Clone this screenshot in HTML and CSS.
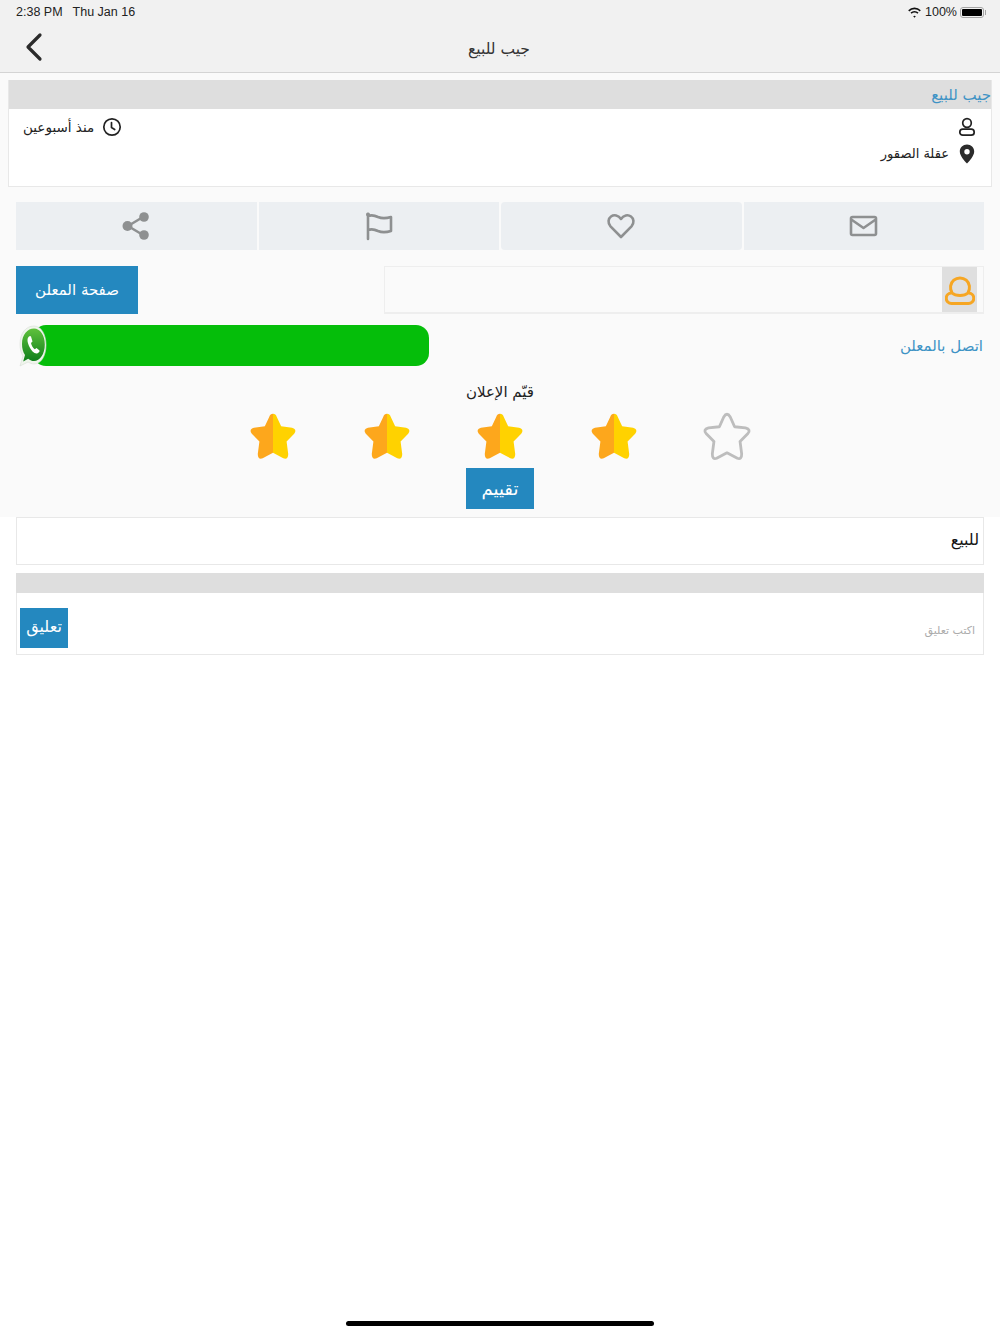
FILE: index.html
```html
<!DOCTYPE html>
<html lang="ar" dir="rtl">
<head>
    <meta charset="UTF-8">
    <meta name="viewport" content="width=device-width, initial-scale=1.0">
    <title>جيب للبيع</title>
    <link rel="stylesheet" href="styles.css">
</head>
<body>
    <svg class="sprites" width="0" height="0">
        <symbol id="star-full" viewBox="0 0 46 46">
            <path class="star-left" d="M23 2.500Q20.500 2.500 19.500 5.500L15.500 14 5.500 15.500Q.5 17 3.500 21L10.500 28 9 39.500Q9 45 13.500 43.500L23 38.500Z"/>
            <path class="star-right" d="M23 2.500Q25.500 2.500 26.500 5.500L30.500 14 40.500 15.500Q45.500 17 42.500 21L35.500 28 37 39.500Q37 45 32.500 43.500L23 38.500Z"/>
        </symbol>
    </svg>

    <header class="top">
        <div class="status" dir="ltr">
            <span class="status-time">2:38 PM</span>
            <span class="status-date">Thu Jan 16</span>
            <span class="status-right">
                <svg width="15" height="11" viewBox="0 0 15 11"><path d="M7.500 2.300c2 0 3.800.8 5.200 2.100l1.100-1.200A9.200 9.200 0 0 0 7.500.6 9.200 9.200 0 0 0 1.200 3.200l1.100 1.200a7.500 7.500 0 0 1 5.200-2.100Zm0 3.300c1.100 0 2.100.4 2.900 1.100l1.100-1.200a5.900 5.900 0 0 0-8 0l1.100 1.200c.8-.7 1.800-1.100 2.900-1.100Zm0 3.200c-.5 0-1 .2-1.300.5l1.300 1.400 1.300-1.400c-.3-.3-.8-.5-1.300-.5Z"/></svg>
                <span>100%</span>
                <span class="battery"><span class="battery-fill"></span></span>
            </span>
        </div>
        <div class="nav">
            <svg class="back" width="20" height="30" viewBox="0 0 20 30"><path d="M17 3 5 15l12 12"/></svg>
            <h1>جيب للبيع</h1>
        </div>
    </header>

    <main class="content">
        <section class="ad-card">
            <h2>جيب للبيع</h2>
            <div class="ad-info">
                <div class="ad-col">
                    <div class="info-row">
                        <svg class="ico-dark" width="20" height="20" viewBox="0 0 20 20"><circle cx="10" cy="6" r="4.300"/><rect x="2.800" y="12.200" width="14.400" height="6" rx="3"/></svg>
                    </div>
                    <div class="info-row">
                        <svg class="ico-fill" width="20" height="20" viewBox="0 0 20 20"><path fill-rule="evenodd" d="M10 .6c-4 0-7.200 3-7.200 6.900 0 4.300 4.700 9.400 7.200 12 2.500-2.600 7.200-7.700 7.200-12C17.200 3.600 14 .6 10 .6Zm0 4.400a2.700 2.700 0 1 1 0 5.400 2.700 2.700 0 0 1 0-5.400Z"/></svg>
                        <span>عقلة الصقور</span>
                    </div>
                </div>
                <div class="info-row info-time">
                    <svg class="ico-dark" width="20" height="20" viewBox="0 0 20 20"><circle cx="10" cy="10" r="8.200"/><path d="M9.500 5.500v5l3.200 2"/></svg>
                    <span>منذ أسبوعين</span>
                </div>
            </div>
        </section>

        <div class="actions">
            <a class="action">
                <svg width="30" height="24" viewBox="0 0 30 24"><rect x="2" y="3" width="25" height="18" rx="1.500"/><path d="m3 6 11.500 8L26 6"/></svg>
            </a>
            <a class="action action-round">
                <svg width="30" height="28" viewBox="0 0 30 28"><path d="M15 25 4.500 14.300C1.500 11 2.200 6.500 5 4.500c3-2.200 7.500-1.500 10 2.500 2.500-4 7-4.700 10-2.500 2.800 2 3.500 6.500.5 9.800Z"/></svg>
            </a>
            <a class="action">
                <svg width="30" height="30" viewBox="0 0 30 30"><path d="M4 3v25M4 5c4-1.500 7-.5 10 1 4 1.700 8 1.500 13 0v14c-5 1.500-9 1.700-13 0-3-1.500-6-2.500-10-1"/><circle cx="4" cy="3.500" r="2" class="dot"/></svg>
            </a>
            <a class="action">
                <svg width="30" height="30" viewBox="0 0 30 30"><path d="M22 6 7 15l15 9"/><circle cx="23" cy="6" r="4.800" class="dot"/><circle cx="6.500" cy="15" r="5" class="dot"/><circle cx="23" cy="24" r="4.800" class="dot"/></svg>
            </a>
        </div>

        <div class="advertiser">
            <div class="advertiser-name">
                <span class="avatar">
                    <svg width="30" height="30" viewBox="0 0 30 30"><path d="M7 17.500a9.500 9.500 0 1 1 16 0"/><path d="M7 18H6.500a5.200 5.200 0 0 0 0 10.500h17a5.200 5.200 0 0 0 0-10.500H23c-2 1.800-4.800 2.500-8 2.500s-6-.7-8-2.500Z"/></svg>
                </span>
            </div>
            <a class="btn btn-page">صفحة المعلن</a>
        </div>

        <div class="contact">
            <a class="contact-link">اتصل بالمعلن</a>
            <a class="whatsapp">
                <svg class="wa-icon" width="28" height="42" viewBox="0 0 28 42">
                    <defs>
                        <linearGradient id="wa-grad" x1="0" y1="0" x2="0" y2="1">
                            <stop offset="0" stop-color="#5fc13c"/>
                            <stop offset="1" stop-color="#0f7f1b"/>
                        </linearGradient>
                    </defs>
                    <path class="wa-edge" d="M15 1C7 1 1 8 1 19c0 5 1 9 3 12L1 41l8-4c2 1 4 2 6 2 7 0 12-8 12-19S22 1 15 1Z"/>
                    <path fill="url(#wa-grad)" d="M15 3.500C8.500 3.500 3 9.500 3 19c0 4.500 1 8 3 11l-1.800 6.500 5-2.800c2 1.400 3.800 2.300 5.800 2.300 6 0 10.800-7 10.800-16.500S21 3.500 15 3.500Z"/>
                    <path class="wa-phone" d="M10 11.500c-2 1.500-2 5 0 9.500 2 4.500 5 7.500 7.500 7.500 1.500 0 3.500-2 3-3l-3-2.500-1.700 1.300c-1.500-.8-3.500-4-3.800-6.300l1.500-1.500-1.500-5c-.5-.7-1.300-.7-2 0Z"/>
                </svg>
            </a>
        </div>

        <section class="rating">
            <p class="rating-title">قيّم الإعلان</p>
            <div class="stars">
                <svg class="star-empty" width="50" height="50" viewBox="0 0 46 46"><path d="M20 5.500Q23 .5 26 5.500L30 14.500 40 15.500Q45.500 17 42 21L35 28 36.500 39.500Q36.500 45 32.500 43.500L23 38.500 13.500 43.500Q9.500 45 9.500 39.500L11 28 4 21Q.5 17 6 15.500L16 14.500Z"/></svg>
                <svg width="50" height="50"><use href="#star-full"/></svg>
                <svg width="50" height="50"><use href="#star-full"/></svg>
                <svg width="50" height="50"><use href="#star-full"/></svg>
                <svg width="50" height="50"><use href="#star-full"/></svg>
            </div>
            <a class="btn btn-rate">تقييم</a>
        </section>
    </main>

    <section class="lower">
        <div class="description">للبيع</div>
        <div class="comments">
            <div class="comments-bar"></div>
            <div class="comment-form">
                <span class="comment-hint">اكتب تعليق</span>
                <a class="btn btn-comment">تعليق</a>
            </div>
        </div>
    </section>

    <div class="home-bar"></div>
</body>
</html>
```

FILE: styles.css
```css
* {
    margin: 0;
    padding: 0;
    box-sizing: border-box;
    font-family: 'DejaVu Sans', 'Noto Sans', sans-serif;
}

body {
    background-color: #FFFFFF;
    color: #222222;
    display: flex;
    flex-direction: column;
    height: 1334px;
    overflow: hidden;
}

.sprites {
    position: absolute;
}

/* top bar */
.top {
    height: 73px;
    background-color: #F1F1F1;
    border-bottom: 1px solid #D4D4D4;
}

.status {
    display: flex;
    align-items: center;
    height: 24px;
    padding: 0 16px;
    font-size: 12.500px;
    color: #222222;
}

.status span {
    font-family: 'Liberation Sans', sans-serif;
}

.status-date {
    margin-left: 10px;
}

.status-right {
    display: flex;
    align-items: center;
    gap: 3px;
    margin-left: auto;
}

.status-right svg {
    fill: #111111;
}

.battery {
    display: block;
    position: relative;
    width: 24px;
    height: 11px;
    padding: 1px;
    border: 1px solid #A5A5A5;
    border-radius: 3px;
}

.battery::after {
    content: "";
    position: absolute;
    right: -3px;
    top: 2px;
    width: 1.500px;
    height: 5px;
    background-color: #A5A5A5;
}

.battery-fill {
    display: block;
    height: 100%;
    background-color: #000000;
    border-radius: 1px;
}

.nav {
    display: flex;
    align-items: center;
    justify-content: center;
    position: relative;
    height: 48px;
}

.nav h1 {
    font-size: 15.500px;
    font-weight: normal;
    color: #333333;
    margin: 2px 2px 0 0;
}

.back {
    position: absolute;
    left: 23px;
    top: 8px;
    fill: none;
    stroke: #2B2B2B;
    stroke-width: 3.200;
    stroke-linecap: round;
    stroke-linejoin: round;
}

/* upper part */
.content {
    background-color: #FAFAFA;
    height: 444px;
    padding: 7px 16px 0;
}

.ad-card {
    margin: 0 -8px 15px;
    height: 107px;
    background-color: #FFFFFF;
    border: 1px solid #E8E8E8;
    border-top: none;
}

.ad-card h2 {
    height: 29px;
    line-height: 31px;
    background-color: #DEDEDE;
    color: #3E93C5;
    font-size: 15px;
    font-weight: normal;
}

.ad-info {
    display: flex;
    justify-content: space-between;
    padding: 7px 14px 0 14px;
}

.ad-col {
    display: flex;
    flex-direction: column;
    gap: 6px;
}

.info-row {
    display: flex;
    align-items: center;
    gap: 8px;
    height: 21px;
    font-size: 13px;
    color: #222222;
}

.info-time {
    font-size: 13.500px;
}

.ico-dark {
    fill: none;
    stroke: #222222;
    stroke-width: 1.700;
    stroke-linecap: round;
    stroke-linejoin: round;
}

.ico-fill {
    fill: #2B2B2B;
}

.actions {
    display: grid;
    grid-template-columns: repeat(4, 1fr);
    gap: 2px;
    height: 48px;
    margin-bottom: 16px;
}

.action {
    display: flex;
    align-items: center;
    justify-content: center;
    background-color: #ECEFF2;
}

.action-round {
    border-radius: 4px;
}

.action svg {
    fill: none;
    stroke: #8E9091;
    stroke-width: 2.600;
    stroke-linecap: round;
    stroke-linejoin: round;
}

.action .dot {
    fill: #8E9091;
    stroke: none;
}

.advertiser {
    display: flex;
    justify-content: space-between;
    height: 48px;
    margin-bottom: 11px;
}

.advertiser-name {
    width: 600px;
    padding-right: 6px;
    border: 1px solid #EEEEEE;
    border-width: 1px 1px 2px;
}

.avatar {
    display: flex;
    align-items: center;
    justify-content: center;
    width: 35px;
    height: 100%;
    background-color: #DFDFDF;
}

.avatar svg {
    fill: none;
    stroke: #F6A623;
    stroke-width: 3;
}

.btn {
    display: flex;
    align-items: center;
    justify-content: center;
    background-color: #2488BF;
    color: #FFFFFF;
    font-size: 15px;
}

.btn-page {
    width: 122px;
}

.contact {
    display: flex;
    align-items: center;
    justify-content: space-between;
    height: 41px;
}

.contact-link {
    color: #3E93C5;
    font-size: 15px;
    margin-right: 1px;
}

.whatsapp {
    display: block;
    position: relative;
    width: 396px;
    height: 41px;
    margin-left: 17px;
    background-color: #05BE0A;
    border-radius: 13px;
}

.wa-icon {
    position: absolute;
    left: -14px;
    top: 0;
}

.wa-edge {
    fill: #EFF5EC;
    stroke: #D8DDD6;
    stroke-width: .600;
}

.wa-phone {
    fill: #FFFFFF;
}

.rating {
    display: flex;
    flex-direction: column;
    align-items: center;
    padding-top: 15px;
}

.rating-title {
    height: 22px;
    line-height: 22px;
    font-size: 15px;
    color: #222222;
}

.stars {
    display: flex;
    justify-content: center;
    gap: 63.500px;
    margin: 8px 0 7px;
    height: 50px;
}

.star-left {
    fill: #FDA71C;
}

.star-right {
    fill: #FFD200;
}

.star-empty {
    fill: none;
    stroke: #BDBDBD;
    stroke-width: 2.600;
    stroke-linejoin: round;
}

.btn-rate {
    width: 68px;
    height: 41px;
    font-size: 18px;
}

/* lower part */
.lower {
    padding: 0 16px;
}

.description {
    height: 48px;
    margin-bottom: 8px;
    padding: 12px 4px 0 0;
    border: 1px solid #E8E8E8;
    font-size: 16px;
    color: #111111;
}

.comments {
    height: 82px;
    border: 1px solid #E8E8E8;
    border-top: none;
}

.comments-bar {
    height: 20px;
    margin: 0 -1px;
    background-color: #DEDEDE;
}

.comment-form {
    display: flex;
    align-items: center;
    justify-content: space-between;
    padding: 15px 8px 0 3px;
}

.comment-hint {
    font-size: 11px;
    color: #ABABAB;
    padding-top: 4px;
}

.btn-comment {
    width: 48px;
    height: 40px;
    padding-bottom: 4px;
    font-size: 16px;
}

.home-bar {
    width: 308px;
    height: 5px;
    margin: auto auto 8px;
    background-color: #000000;
    border-radius: 3px;
}
```
